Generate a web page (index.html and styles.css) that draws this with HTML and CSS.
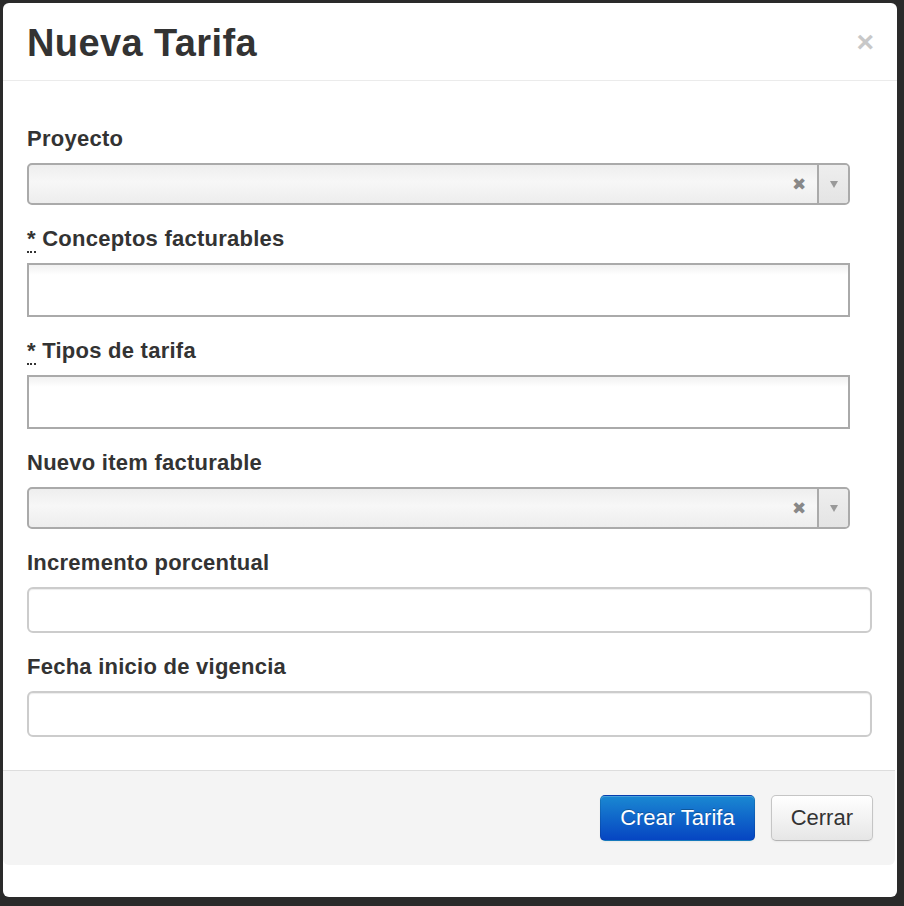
FILE: index.html
```html
<!doctype html>
<html lang="es">
    <head>
        <meta charset="UTF-8" />
        <meta name="viewport" content="width=device-width, initial-scale=1.0" />
        <title>Nueva Tarifa</title>
        <link rel="stylesheet" href="styles.css">
    </head>
    <body>
        <div class="modal">
            <div class="modalHeader">
                <h3>Nueva Tarifa</h3>
                <span class="close">&times;</span>
            </div>
            <div class="modalBody">
                <div class="field">
                    <label>Proyecto</label>
                    <div class="choice">
                        <span class="choiceText"></span>
                        <span class="choiceClear">&#x2716;</span>
                        <span class="choiceArrow"><b></b></span>
                    </div>
                </div>
                <div class="field">
                    <label><abbr title="requerido">*</abbr> Conceptos facturables</label>
                    <div class="multi"></div>
                </div>
                <div class="field">
                    <label><abbr title="requerido">*</abbr> Tipos de tarifa</label>
                    <div class="multi"></div>
                </div>
                <div class="field">
                    <label>Nuevo item facturable</label>
                    <div class="choice">
                        <span class="choiceText"></span>
                        <span class="choiceClear">&#x2716;</span>
                        <span class="choiceArrow"><b></b></span>
                    </div>
                </div>
                <div class="field">
                    <label>Incremento porcentual</label>
                    <input type="text" class="textInput" />
                </div>
                <div class="field">
                    <label>Fecha inicio de vigencia</label>
                    <input type="text" class="textInput" />
                </div>
            </div>
            <div class="modalFooter">
                <button class="btn btnPrimary">Crear Tarifa</button>
                <button class="btn">Cerrar</button>
            </div>
        </div>
    </body>
</html>
```

FILE: styles.css
```css
html, body {
    margin: 0;
    height: 100%;
}
body {
    background-color: #2a2a2a;
    font-family: "Liberation Sans", Arial, sans-serif;
    color: #333;
    padding: 3px 7px 9px 3px;
    box-sizing: border-box;
}
.modal {
    background: #fff;
    border-radius: 6px;
    height: 100%;
    box-sizing: border-box;
    padding-bottom: 32px;
    display: flex;
    flex-direction: column;
}
.modalHeader {
    display: flex;
    justify-content: space-between;
    align-items: center;
    padding: 20px 23px 17px 24px;
    border-bottom: 1px solid #ebebeb;
}
.modalHeader h3 {
    margin: 0;
    font-size: 38px;
    line-height: 40px;
    letter-spacing: 0.4px;
    font-weight: bold;
    color: #333;
}
.close {
    font-size: 30px;
    font-weight: bold;
    line-height: 20px;
    color: #c8c8c8;
    margin-top: -2px;
}
.modalBody {
    flex: 1;
    padding: 43px 25px 14px 24px;
}
.field {
    margin-bottom: 19px;
}
.field label {
    display: block;
    font-size: 22px;
    line-height: 30px;
    letter-spacing: 0.25px;
    font-weight: bold;
    color: #333;
    margin-bottom: 9px;
}
abbr {
    text-decoration: none;
    border-bottom: 2px dotted #333;
    cursor: help;
}
.choice {
    width: 823px;
    height: 42px;
    box-sizing: border-box;
    border: 2px solid #aaa;
    border-radius: 5px;
    background: linear-gradient(to bottom, #eeeeee 0%, #f7f7f7 45%, #ededed 100%);
    display: flex;
    align-items: stretch;
}
.choiceText {
    flex: 1;
}
.choiceClear {
    display: flex;
    align-items: center;
    font-size: 17px;
    color: #888;
    padding-right: 11px;
}
.choiceArrow {
    width: 29px;
    border-left: 2px solid #aaa;
    background: linear-gradient(to bottom, #eeeeee, #e4e4e4);
    border-radius: 0 3px 3px 0;
    display: flex;
    align-items: center;
    justify-content: center;
}
.choiceArrow b {
    width: 0;
    height: 0;
    border-left: 4px solid transparent;
    border-right: 4px solid transparent;
    border-top: 7px solid #999;
}
.multi {
    width: 823px;
    height: 54px;
    box-sizing: border-box;
    border: 2px solid #aaa;
    background: linear-gradient(to bottom, #f1f1f1 0%, #ffffff 10px);
}
.textInput {
    display: block;
    width: 100%;
    height: 46px;
    box-sizing: border-box;
    border: 2px solid #ccc;
    border-radius: 6px;
    box-shadow: inset 0 1px 1px rgba(0, 0, 0, 0.075);
    padding: 6px 10px;
    font-size: 20px;
    font-family: inherit;
}
.modalFooter {
    display: flex;
    justify-content: flex-end;
    gap: 16px;
    padding: 24px 22px 24px 0;
    margin-right: 2px;
    background: #f4f4f4;
    border-top: 1px solid #ddd;
    border-radius: 0 0 6px 6px;
}
.btn {
    height: 46px;
    padding: 0 19px;
    font-family: inherit;
    font-size: 22px;
    color: #333;
    border: 1px solid #c5c5c5;
    border-bottom-color: #b3b3b3;
    border-radius: 5px;
    background: linear-gradient(to bottom, #ffffff, #e6e6e6);
    box-shadow: inset 0 1px 0 rgba(255, 255, 255, 0.2), 0 1px 2px rgba(0, 0, 0, 0.05);
}
.btnPrimary {
    color: #fff;
    text-shadow: 0 -1px 0 rgba(0, 0, 0, 0.25);
    border-color: rgba(0, 0, 0, 0.1);
    background: linear-gradient(to bottom, #1a88d2, #0645c2);
}
```
